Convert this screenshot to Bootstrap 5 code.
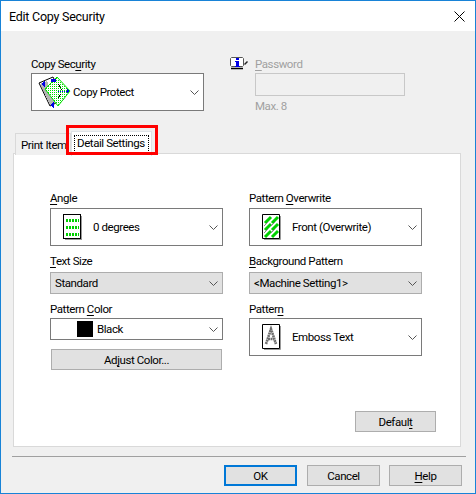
<!DOCTYPE html>
<html lang="en">
<head>
  <meta charset="UTF-8" />
  <meta name="viewport" content="width=device-width, initial-scale=1" />
  <title>Edit Copy Security</title>
  <link href="https://cdn.jsdelivr.net/npm/bootstrap@5.3.3/dist/css/bootstrap.min.css" rel="stylesheet" />
  <style>
    body {
      margin: 0;
      background: #f0f0f0;
      font-family: Roboto, "Liberation Sans", sans-serif;
      font-size: 11.5px;
      line-height: 17px;
      letter-spacing: -.42px;
      color: #000;
    }
    u { text-underline-offset: 2px; }
    .dlg {
      width: 476px;
      height: 494px;
      border: 1px solid #1883d7;
      background: #f0f0f0;
    }
    .dlg-title {
      height: 30px;
      background: #fff;
      padding: 0 10px 0 8px;
      font-size: 12.5px;
      letter-spacing: -.25px;
    }
    .dlg-top { padding: 25px 0 0 30px; height: 100px; }
    .fld-wide { width: 173px; }
    .fld-label { height: 16px; }
    .pw-area { margin-left: 25px; width: 176px; }
    .pw-col { margin-left: 6px; }
    .pw-off { color: #a0a0a0; }
    .pw-box {
      width: 150px;
      height: 23px;
      margin: 1px 0 2px;
      border: 1px solid #c8c8c8;
      background: #f0f0f0;
    }
    .combo {
      width: 173px;
      background: #fff;
      border: 1px solid #7a7a7a;
    }
    .combo-tall { height: 38px; }
    .combo-low { height: 22px; }
    .combo-grey { background: #e1e1e1; border-color: #adadad; }
    .combo-arrow { margin-left: auto; margin-right: 4px; }
    .ico-gap { margin: 0 10px 0 12px; }
    .ico-wide { margin: 0 4px 0 26px; }
    .ico-first { margin: 0 2px 0 6px; }
    .tab-wrap { margin-left: 12px; width: 448px; }
    .tab-wrap .nav-tabs {
      height: 22px;
      border-bottom: 0;
      margin-left: 2px;
      align-items: flex-end;
    }
    .tab-wrap .nav-link {
      font-size: 11.5px;
      line-height: 17px;
      letter-spacing: -.42px;
      color: #000;
      border-radius: 0;
      margin: 0;
      white-space: nowrap;
      text-align: left;
      background: #f0f0f0;
      border: 1px solid #d9d9d9;
      border-bottom: 0;
    }
    .tab-plain { width: 56px; height: 22px; padding: 2px 0 0 5px; }
    .tab-wrap .nav-link.active {
      width: 81px;
      height: 25px;
      padding: 3px 2px;
      background: #fff;
      margin-bottom: -1px;
      position: relative;
      z-index: 1;
    }
    .focus-dots {
      display: block;
      height: 18px;
      padding: 0 0 0 3px;
      outline: 1px dotted #000;
      outline-offset: -1px;
    }
    .red-mark {
      position: absolute;
      left: 53px;
      top: -6px;
      width: 92px;
      height: 30px;
      border: 3px solid #f00;
      z-index: 2;
    }
    .tab-panel {
      height: 294px;
      background: #fff;
      border: 1px solid #d9d9d9;
      padding: 36px 24px 14px 36px;
    }
    .panel-cols { gap: 26px; }
    .lbl-a { margin-bottom: 2px; }
    .lbl-b { margin-top: 7px; margin-bottom: 3px; }
    .lbl-c { margin-top: 7px; margin-bottom: 1px; }
    .win-btn {
      height: 21px;
      padding: 1px 0 0;
      font-size: 11.5px;
      line-height: 18px;
      letter-spacing: -.42px;
      color: #000;
      background: #e1e1e1;
      border: 1px solid #adadad;
      border-radius: 0;
    }
    .win-btn:hover { background: #e1e1e1; border-color: #adadad; color: #000; }
    .btn-adjust { width: 171px; margin: 9px 0 0 1px; }
    .btn-default { width: 81px; }
    .btn-foot { width: 73px; }
    .btn-ok { border: 2px solid #0078d7; line-height: 17px; }
    .btn-ok:hover { border-color: #0078d7; }
    .btn-last { margin-left: -1px; }
    .foot-rule { height: 1px; margin: 9px 9px 0 11px; background: #a0a0a0; }
    .foot-btns { gap: 10px; padding: 8px 0 0 223px; }
  </style>
</head>
<body>

<div class="dlg d-flex flex-column">
  <!-- Title bar -->
  <div class="dlg-title d-flex align-items-center justify-content-between">
    <span>Edit Copy Security</span>
    <svg width="11" height="11" viewBox="0 0 11 11"><path d="M.5.5l10 10M10.5.5l-10 10" stroke="#000" fill="none"/></svg>
  </div>

  <!-- Copy security + password -->
  <div class="dlg-top d-flex">
    <div class="fld-wide">
      <div class="fld-label lbl-c mt-0">Copy Sec<u>u</u>rity</div>
      <div class="combo combo-tall d-flex align-items-center">
        <svg class="ico-first flex-shrink-0" width="33" height="32" viewBox="0 0 33 32" shape-rendering="crispEdges">
          <defs>
            <pattern id="chk" width="2" height="2" patternUnits="userSpaceOnUse"><rect width="1" height="1" fill="#00e000"/></pattern>
          </defs>
          <path d="M1 7l14-6 11 22-14 7z" fill="#fff" stroke="#000" shape-rendering="auto"/>
          <path d="M2 8l7-3 9 21-6 3z" fill="#b4b4b4"/>
          <path d="M19 1l13 14-12 15L7 13z" fill="#fff" stroke="#00e000" shape-rendering="auto"/>
          <path d="M19 1l13 14-12 15L7 13z" fill="url(#chk)"/>
          <path d="M20 8l5 7M20 22l4-5" stroke="#000" stroke-dasharray="1 1" fill="none"/>
          <path d="M20 15h10" stroke="#0000e6" stroke-dasharray="1 1" fill="none"/>
          <path d="M3 8l4-3v6zM13 3h5v3h-5zM29 13l3 2-3 2zM12 29l4-3v6z" fill="#0000e6"/>
        </svg>
        <span>Copy Protect</span>
        <svg class="combo-arrow" width="9" height="5" viewBox="0 0 9 5"><path d="M.5.5l4 4 4-4" stroke="#555" fill="none"/></svg>
      </div>
    </div>
    <div class="pw-area d-flex">
      <svg class="flex-shrink-0" width="20" height="14" viewBox="0 0 20 14">
        <path d="M2.5 1.500h11l1 1v7l-1 1h-11l-1-1v-7z" fill="#fff" stroke="#555"/>
        <path d="M2 12.500h12" stroke="#000" stroke-width="1.500"/>
        <path d="M7 2h3v2H7zM6 5h4v5h1v1H6v-1h1V6H6z" fill="#0000e6"/>
        <path d="M15 8l3-3 1 1-3 3z" fill="#222"/>
      </svg>
      <div class="pw-col">
        <div class="pw-off fld-label"><u>P</u>assword</div>
        <div class="pw-box"></div>
        <div class="pw-off">Max. 8</div>
      </div>
    </div>
  </div>

  <!-- Tabs -->
  <div class="tab-wrap position-relative">
    <ul class="nav nav-tabs">
      <li class="nav-item"><button class="nav-link tab-plain" type="button">Print Item</button></li>
      <li class="nav-item"><button class="nav-link active" type="button"><span class="focus-dots">Detail Settings</span></button></li>
    </ul>
    <div class="red-mark"></div>
    <div class="tab-panel d-flex flex-column">
      <div class="panel-cols d-flex">
        <div>
          <div class="fld-label lbl-a"><u>A</u>ngle</div>
          <div class="combo combo-tall d-flex align-items-center">
            <svg class="ico-gap flex-shrink-0" width="20" height="26" viewBox="0 0 20 26" shape-rendering="crispEdges">
              <path d="M.5.500h17v24H.5z" fill="#fff" stroke="#000"/>
              <path d="M3 6h13M3 13h13M3 20h13" stroke="#00d000" stroke-width="3" stroke-dasharray="2 1"/>
              <path d="M18 2h1v24H2v-1h16z" fill="#999"/>
            </svg>
            <span>0 degrees</span>
            <svg class="combo-arrow" width="9" height="5" viewBox="0 0 9 5"><path d="M.5.5l4 4 4-4" stroke="#555" fill="none"/></svg>
          </div>
          <div class="fld-label lbl-b"><u>T</u>ext Size</div>
          <div class="combo combo-low combo-grey d-flex align-items-center">
            <span class="ps-1">Standard</span>
            <svg class="combo-arrow" width="9" height="5" viewBox="0 0 9 5"><path d="M.5.5l4 4 4-4" stroke="#555" fill="none"/></svg>
          </div>
          <div class="fld-label lbl-c">Pattern <u>C</u>olor</div>
          <div class="combo combo-low d-flex align-items-center">
            <svg class="ico-wide flex-shrink-0" width="16" height="16" viewBox="0 0 16 16"><rect width="16" height="16" fill="#000"/></svg>
            <span>Black</span>
            <svg class="combo-arrow" width="9" height="5" viewBox="0 0 9 5"><path d="M.5.5l4 4 4-4" stroke="#555" fill="none"/></svg>
          </div>
          <button class="btn win-btn btn-adjust d-block" type="button">Ad<u>j</u>ust Color...</button>
        </div>
        <div>
          <div class="fld-label lbl-a">Pattern <u>O</u>verwrite</div>
          <div class="combo combo-tall d-flex align-items-center">
            <svg class="ico-gap flex-shrink-0" width="20" height="26" viewBox="0 0 20 26">
              <path d="M.5.500h17v24H.5z" fill="#fff" stroke="#000"/>
              <path d="M3 9l6-6M10 9l6-6M3 16l6-6M10 16l6-6M3 23l6-6M10 23l6-6" stroke="#00d000" stroke-width="3" fill="none"/>
              <path d="M2 12l4-4M9 12l4-4M2 19l4-4M9 19l4-4" stroke="#888" fill="none"/>
              <path d="M18.500 2v23.500H2" stroke="#999" fill="none"/>
            </svg>
            <span>Front (Overwrite)</span>
            <svg class="combo-arrow" width="9" height="5" viewBox="0 0 9 5"><path d="M.5.5l4 4 4-4" stroke="#555" fill="none"/></svg>
          </div>
          <div class="fld-label lbl-b"><u>B</u>ackground Pattern</div>
          <div class="combo combo-low combo-grey d-flex align-items-center">
            <span class="ps-1">&lt;Machine Setting1&gt;</span>
            <svg class="combo-arrow" width="9" height="5" viewBox="0 0 9 5"><path d="M.5.5l4 4 4-4" stroke="#555" fill="none"/></svg>
          </div>
          <div class="fld-label lbl-c">Patter<u>n</u></div>
          <div class="combo combo-tall d-flex align-items-center">
            <svg class="ico-gap flex-shrink-0" width="20" height="26" viewBox="0 0 20 26">
              <path d="M.5.500h17v24H.5z" fill="#fff" stroke="#000"/>
              <path d="M4 20L9 5l5 15M6 15h6" stroke="#6e6e6e" stroke-width="2.600" stroke-dasharray="2 .5" fill="none"/>
              <path d="M18.500 2v23.500H2" stroke="#999" fill="none"/>
            </svg>
            <span>Emboss Text</span>
            <svg class="combo-arrow" width="9" height="5" viewBox="0 0 9 5"><path d="M.5.5l4 4 4-4" stroke="#555" fill="none"/></svg>
          </div>
        </div>
      </div>
      <button class="btn win-btn btn-default mt-auto ms-auto" type="button">Defaul<u>t</u></button>
    </div>
  </div>

  <!-- Footer buttons -->
  <div class="foot-rule"></div>
  <div class="foot-btns d-flex">
    <button class="btn win-btn btn-foot btn-ok" type="button">OK</button>
    <button class="btn win-btn btn-foot" type="button">Cancel</button>
    <button class="btn win-btn btn-foot btn-last" type="button"><u>H</u>elp</button>
  </div>
</div>

<script src="https://cdn.jsdelivr.net/npm/bootstrap@5.3.3/dist/js/bootstrap.bundle.min.js"></script>
</body>
</html>
